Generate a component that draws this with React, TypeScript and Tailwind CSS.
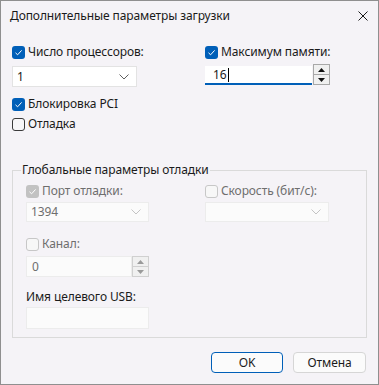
import React from "react";

type CbProps = { checked?: boolean; disabled?: boolean };

function Box({ checked, disabled }: CbProps) {
  if (checked) {
    return (
      <span
        className={`flex h-[13px] w-[13px] shrink-0 items-center justify-center rounded-[3px] ${
          disabled ? "bg-[#c2c2c2]" : "bg-[#005fb8]"
        }`}
      >
        <svg width="9" height="9" viewBox="0 0 9 9" fill="none">
          <path d="M1.5 4.8 L3.6 6.8 L7.6 2.4" stroke="#ffffff" strokeWidth="1" />
        </svg>
      </span>
    );
  }
  return (
    <span
      className={`h-[13px] w-[13px] shrink-0 rounded-[3px] border ${
        disabled ? "border-[#c7c7c7] bg-[#f7f7f7]" : "border-[#3a3a3a] bg-[#f7f6f8]"
      }`}
    />
  );
}

function Check({ label, checked, disabled }: CbProps & { label: string }) {
  return (
    <div className="flex h-[14px] items-center gap-[3px]">
      <Box checked={checked} disabled={disabled} />
      <span className={disabled ? "text-[#6e6e6e]" : "text-[#1b1b1b]"}>{label}</span>
    </div>
  );
}

function Chevron({ disabled }: { disabled?: boolean }) {
  return (
    <svg width="10" height="6" viewBox="0 0 10 6" fill="none">
      <path d="M0.5 0.5 L5 5 L9.5 0.5" stroke={disabled ? "#c4c4c4" : "#5f5f5f"} strokeWidth="1" />
    </svg>
  );
}

function Combo({ value, disabled, w, h }: { value: string; disabled?: boolean; w: string; h: string }) {
  return (
    <div
      className={`flex items-center justify-between border pl-[4px] pr-[7px] ${w} ${h} ${
        disabled ? "border-[#ececec] bg-[#fbfbfb] text-[#6e6e6e]" : "border-[#e3e3e3] bg-white text-[#1b1b1b]"
      }`}
    >
      <span>{value}</span>
      <Chevron disabled={disabled} />
    </div>
  );
}

function Tri({ up, color }: { up?: boolean; color: string }) {
  return (
    <svg width="7" height="4" viewBox="0 0 7 4">
      <path d={up ? "M0 4 L3.5 0 L7 4 Z" : "M0 0 L3.5 4 L7 0 Z"} fill={color} />
    </svg>
  );
}

function Spinner({ disabled }: { disabled?: boolean }) {
  const border = disabled ? "border-[#d0d0d0]" : "border-[#a8a8a8]";
  const color = disabled ? "#9a9a9a" : "#111111";
  return (
    <div className={`flex h-[21px] w-[17px] flex-col border ${border} bg-[#f0f0f0]`}>
      <div className={`flex flex-1 items-center justify-center border-b ${border}`}>
        <Tri up color={color} />
      </div>
      <div className="flex flex-1 items-center justify-center">
        <Tri color={color} />
      </div>
    </div>
  );
}

export default function App() {
  return (
    <div className="flex h-[385px] w-[379px] flex-col border border-[#8f8f8f] bg-[#f5f3f7] font-['Noto_Sans',sans-serif] text-[12px] leading-[16px] tracking-[-0.1px] text-[#1b1b1b]">
      <div className="flex h-[30px] shrink-0 items-center justify-between pl-[9px] pr-[10px]">
        <span className="text-[#1a1a1a]">Дополнительные параметры загрузки</span>
        <svg width="10" height="10" viewBox="0 0 10 10" fill="none">
          <path d="M0.5 0.5 L9.5 9.5 M9.5 0.5 L0.5 9.5" stroke="#1a1a1a" strokeWidth="1" />
        </svg>
      </div>

      <div className="flex flex-col px-[11px]">
        <div className="mt-[14px] grid grid-cols-[193px_1fr]">
          <div className="flex flex-col">
            <Check label="Число процессоров:" checked />
            <div className="mt-[7px]">
              <Combo value="1" w="w-[125px]" h="h-[21px]" />
            </div>
          </div>
          <div className="flex flex-col">
            <Check label="Максимум памяти:" checked />
            <div className="mt-[5px] flex items-start gap-[1px]">
              <div className="mt-[2px] flex h-[19px] w-[107px] items-center border-b-2 border-[#005fb8] bg-white pl-[8px]">
                <span>16</span>
                <span className="ml-[1px] inline-block h-[14px] w-[1px] bg-black" />
              </div>
              <Spinner />
            </div>
          </div>
        </div>

        <div className="mt-[10px]">
          <Check label="Блокировка PCI" checked />
        </div>
        <div className="mt-[6px]">
          <Check label="Отладка" />
        </div>

        <div className="relative mt-[39px] border border-[#dadada] pb-[8px] pl-[13px]">
          <span className="absolute -top-[9px] left-[8px] bg-[#f5f3f7] px-[1px] text-[#1b1b1b]">
            Глобальные параметры отладки
          </span>
          <div className="mt-[13px] grid grid-cols-[179px_1fr]">
            <div className="flex flex-col">
              <Check label="Порт отладки:" checked disabled />
              <div className="mt-[4px]">
                <Combo value="1394" disabled w="w-[123px]" h="h-[20px]" />
              </div>
            </div>
            <div className="flex flex-col">
              <Check label="Скорость (бит/с):" disabled />
              <div className="mt-[4px]">
                <Combo value="" disabled w="w-[124px]" h="h-[20px]" />
              </div>
            </div>
          </div>

          <div className="mt-[15px]">
            <Check label="Канал:" disabled />
          </div>
          <div className="mt-[5px] flex items-start">
            <div className="flex h-[21px] w-[106px] items-center border border-[#ececec] bg-[#fbfbfb] pl-[5px] text-[#6e6e6e]">
              0
            </div>
            <Spinner disabled />
          </div>

          <div className="mt-[12px] text-[#1b1b1b]">Имя целевого USB:</div>
          <div className="mt-[2px] h-[22px] w-[123px] border border-[#ececec] bg-[#fbfbfb]" />
        </div>

        <div className="mr-[1px] mt-[14px] flex justify-end gap-[10px]">
          <button className="flex h-[21px] w-[72px] items-center justify-center rounded-[4px] border border-[#005fb8] bg-[#fbfbfb] text-[#1b1b1b]">
            OK
          </button>
          <button className="flex h-[21px] w-[73px] items-center justify-center rounded-[4px] border border-[#d6d6d6] bg-[#fbfbfb] text-[#1b1b1b]">
            Отмена
          </button>
        </div>
      </div>
    </div>
  );
}
